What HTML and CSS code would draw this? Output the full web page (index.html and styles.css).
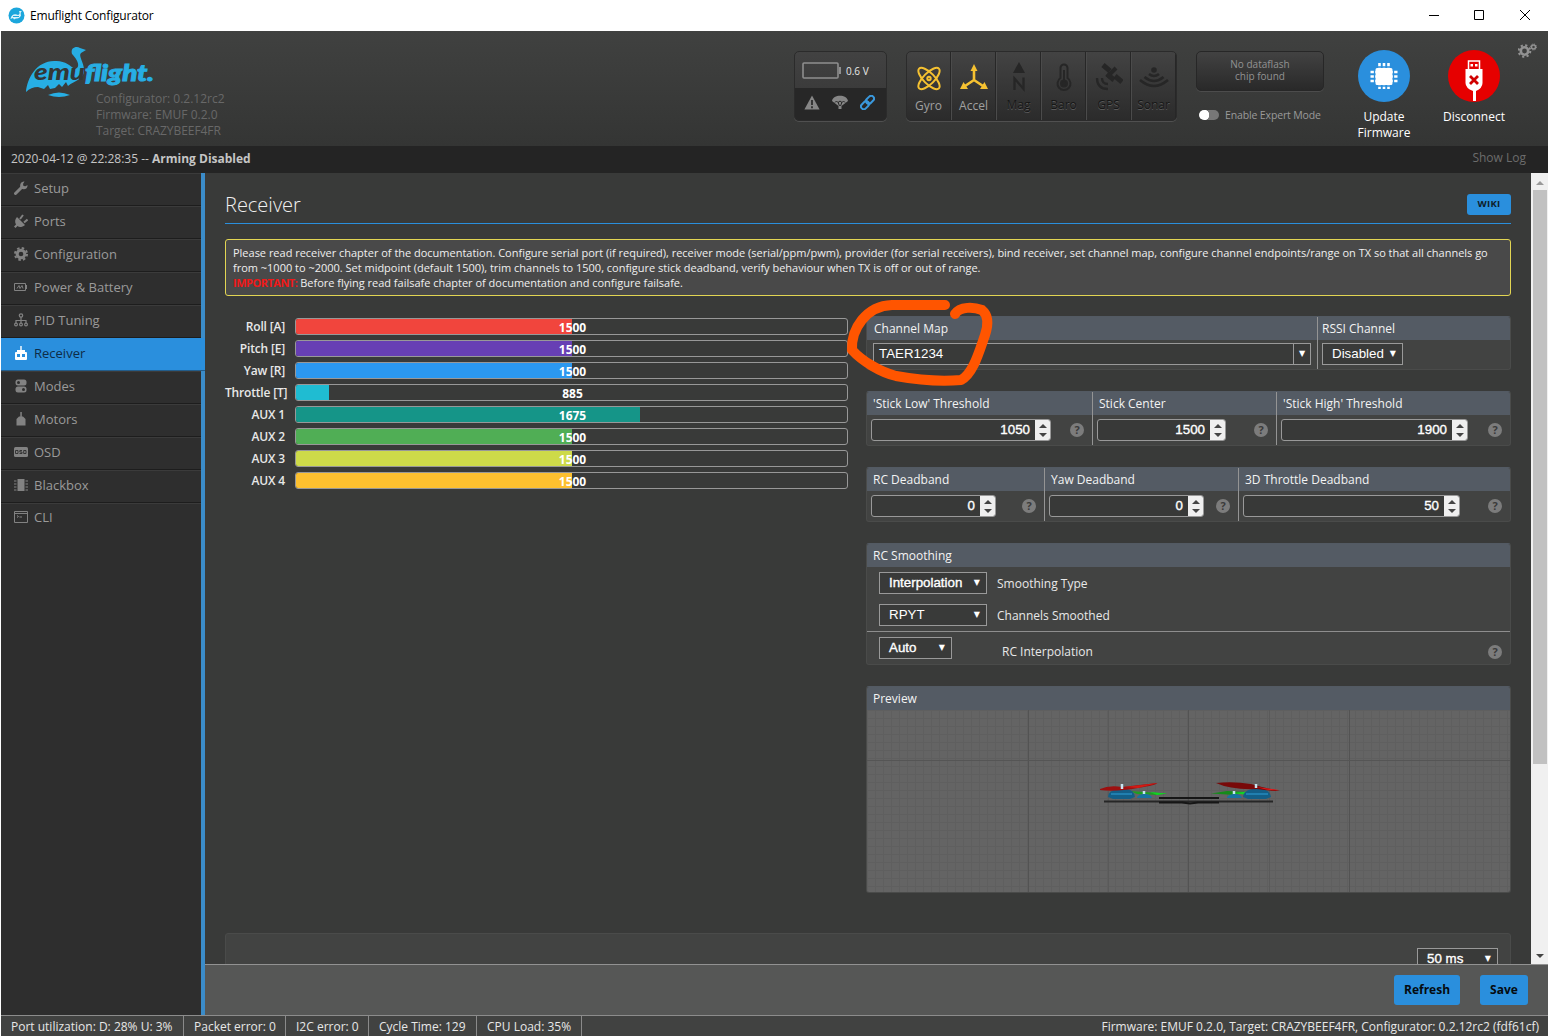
FILE: index.html
```html
<!DOCTYPE html>
<html lang="en">
<head>
<meta charset="utf-8">
<title>Emuflight Configurator</title>
<link rel="stylesheet" href="styles.css">
</head>
<body>
<div class="window">
  <div class="titlebar">
    <svg class="app-icon" width="17" height="17" viewBox="0 0 17 17"><circle cx="8.5" cy="8.5" r="8" fill="#1ba6dc"/><path d="M2.500 12C3 7.500 7 6 10 8Q12.500 7 11 4L14 4Q12 5 13 8.500Q11.500 12 8 11.500L6 12.500L5 11Z" fill="#d8f1fa"/><path d="M5 9.500h6" stroke="#1ba6dc"/></svg>
    <span class="app-title">Emuflight Configurator</span>
    <svg class="win-buttons" width="110" height="31" viewBox="0 0 110 31" fill="none" stroke="#000"><path d="M0 15.500h10M45.500 10.500h9v9h-9zM91 10l10 10M101 10l-10 10"/></svg>
  </div>

  <header class="header">
    <div class="brand">
      <svg width="132" height="56" viewBox="24 44 132 56">
        <path d="M26 92C27 78 37 61 54 61C65 60 70 66 75 69C82 67 76 58 72 54C70 47 77 46 80 48L86 50L81 53C78 56 84 62 84 70C84 80 75 80 68 86L66 82L62 87L59 84L55 88L50 89L48 85L44 89L38 87Q31 87 26 92Z" fill="#27aee4"/>
        <path d="M48 95Q59 90 70 95Q59 99 48 95Z" fill="#27aee4"/>
        <text class="logo-text" x="34" y="80" textLength="51" lengthAdjust="spacingAndGlyphs" fill="#343635">emu</text>
        <text class="logo-text" x="85" y="81" textLength="69" lengthAdjust="spacingAndGlyphs" fill="#27aee4" stroke="#27aee4">flight.</text>
      </svg>
      <div class="versions"><span>Configurator: 0.2.12rc2</span><span>Firmware: EMUF 0.2.0</span><span class="target">Target: CRAZYBEEF4FR</span></div>
    </div>

    <div class="power">
      <div class="power-top">
        <svg width="40" height="18" viewBox="0 0 40 18"><rect x="1" y="1" width="35" height="15" rx="1" fill="none" stroke="#8e8e8e" stroke-width="1.600"/><path d="M37 5h2v7h-2z" fill="#8e8e8e"/></svg>
        <span>0.6 V</span>
      </div>
      <div class="power-bottom">
        <svg width="16" height="15" viewBox="0 0 16 15"><path d="M8 0.500L15.600 14.500H0.400Z" fill="#868686"/><path d="M8 5v5M8 11.200v2" stroke="#272727" stroke-width="1.700"/></svg>
        <svg width="16" height="15" viewBox="0 0 16 15"><path d="M0 6C1-1 15-1 16 6L9.500 11v3h-3v-3Z" fill="#868686"/><path d="M3 7.500Q4.500 4.500 6 7.500Q8 4.500 10 7.500Q11.500 4.500 13 7.500M6 7l1.500 4M10 7l-1.500 4" fill="none" stroke="#272727"/></svg>
        <svg width="15" height="15" viewBox="0 0 15 15" fill="none" stroke="#3a98dc" stroke-width="2"><rect x="5.500" y="2" width="9" height="5.600" rx="2.800" transform="rotate(-45 10 4.800)"/><rect x="0.500" y="7.400" width="9" height="5.600" rx="2.800" transform="rotate(-45 5 10.200)"/></svg>
      </div>
    </div>

    <div class="sensors">
      <div class="sensor on"><svg width="28" height="32" viewBox="0 0 28 32" fill="none" stroke="#f5c131" stroke-width="2"><ellipse cx="14" cy="17.500" rx="14" ry="5.500" transform="rotate(45 14 17.500)"/><ellipse cx="14" cy="17.500" rx="14" ry="5.500" transform="rotate(-45 14 17.500)"/><circle cx="14" cy="17.500" r="1.700"/></svg><span>Gyro</span></div>
      <div class="sensor on"><svg width="28" height="32" viewBox="0 0 28 32"><path d="M14 7v13M14 19l-9 6M14 19l9 6" stroke="#f5c131" stroke-width="2.600"/><path d="M14 3l3.500 7h-7zM0 28l3.500-7 4.500 7zM28 28l-3.500-7-4.500 7z" fill="#f5c131"/></svg><span>Accel</span></div>
      <div class="sensor"><svg width="28" height="32" viewBox="0 0 28 32"><path d="M14 1l6 11H8z" fill="#262626"/><path d="M9.500 29V17.500l9 10.500V16.500" fill="none" stroke="#262626" stroke-width="2.300"/></svg><span>Mag</span></div>
      <div class="sensor"><svg width="28" height="32" viewBox="0 0 28 32" fill="none" stroke="#262626" stroke-width="2"><path d="M10.500 17V7a3.500 3.500 0 0 1 7 0v10a6.500 6.500 0 1 1-7 0zM14 9v12"/><circle cx="14" cy="22.500" r="3" fill="#262626"/></svg><span>Baro</span></div>
      <div class="sensor"><svg width="28" height="32" viewBox="0 0 28 32" fill="none" stroke="#262626"><path d="M8 4l7 6M20 15l7 6" stroke-width="5"/><path d="M12 16l9-9" stroke-width="4"/><path d="M12 13l7 6" stroke-width="5"/><path d="M7 17q0 6 6 6M2 17q0 11 11 11" stroke-width="2.300"/></svg><span>GPS</span></div>
      <div class="sensor"><svg width="30" height="32" viewBox="0 0 30 32" fill="none" stroke="#262626" stroke-width="2.600"><circle cx="15" cy="9" r="1.500"/><path d="M10 13q5 4 10 0M5.500 16q9.500 8 19 0M1 19q14 12 28 0"/></svg><span>Sonar</span></div>
    </div>

    <div class="flash-column">
      <div class="dataflash">No dataflash<br>chip found</div>
      <div class="expert"><i class="switch"></i><span>Enable Expert Mode</span></div>
    </div>

    <div class="action update">
      <svg width="52" height="52" viewBox="0 0 52 52"><circle cx="26" cy="26" r="26" fill="#2a8fdd"/><rect x="17.500" y="18" width="17" height="17" rx="1.500" fill="#fff"/><path d="M21.500 13v26M26 13v26M30.500 13v26M12.500 22h27M12.500 26.500h27M12.500 31h27" stroke="#fff" stroke-width="2.600"/><path d="M16.500 17h19v19h-19z" fill="none" stroke="#2a8fdd" stroke-width="1.300"/></svg>
      <span>Update<br>Firmware</span>
    </div>
    <div class="action disconnect">
      <svg width="52" height="52" viewBox="0 0 52 52"><circle cx="26" cy="26" r="26" fill="#e60000"/><path d="M20.500 19v-8h11v8" fill="none" stroke="#fff" stroke-width="1.500"/><path d="M22.500 14h2.500v2.500h-2.500zM27 14h2.500v2.500H27zM17.500 19h17v14q0 5-6.500 8v10h-3V41q-7.500-3-7.500-8z" fill="#fff"/><path d="M22 26l8 8M30 26l-8 8" stroke="#d00000" stroke-width="2.800"/></svg>
      <span>Disconnect</span>
    </div>
    <svg class="options" width="19" height="16" viewBox="0 0 19 16" fill="none" stroke="#929292"><circle cx="6.500" cy="8" r="3.700" stroke-width="2.600"/><circle cx="6.500" cy="8" r="5.800" stroke-width="2" stroke-dasharray="2.200 2.350"/><circle cx="15.500" cy="4" r="2" stroke-width="1.500"/><circle cx="15.500" cy="4" r="3" stroke-dasharray="1.200 1.150"/></svg>
  </header>

  <div class="log"><span>2020-04-12 @ 22:28:35 -- <b>Arming Disabled</b></span><span class="show-log">Show Log</span></div>

  <div class="body">
    <nav class="tabs">
      <a class="tab"><svg width="14" height="14" viewBox="0 0 14 14"><path d="M1.500 12.500L8 6" stroke="#828282" stroke-width="3" stroke-linecap="round"/><path d="M10.500 0.500L9 3l.500 2 2 .300L13.500 4C14 8 10 9 7 7.500 5 4 7 0 10.500.500z" fill="#828282"/></svg>Setup</a>
      <a class="tab"><svg width="14" height="14" viewBox="0 0 14 14"><path d="M3 3l8 8C8 13.500 5 13.500 3.500 12L1.500 14 0 12.500 2 10.500C.500 8 1 5 3 3z" fill="#828282"/><path d="M6 5l3-4M10 8.500l3.500-3" stroke="#828282" stroke-width="2"/></svg>Ports</a>
      <a class="tab"><svg width="14" height="14" viewBox="0 0 14 14" fill="none" stroke="#828282"><circle cx="7" cy="7" r="3.800" stroke-width="3"/><circle cx="7" cy="7" r="6" stroke-width="2" stroke-dasharray="2.500 2.212"/></svg>Configuration</a>
      <a class="tab"><svg width="14" height="14" viewBox="0 0 14 14" fill="none" stroke="#828282"><path d="M.500 3.500h11v7H.500zM12.500 5v4M3 8.500l2-3 1 3 2-3 1 3"/></svg>Power &amp; Battery</a>
      <a class="tab"><svg width="14" height="14" viewBox="0 0 14 14" fill="none" stroke="#828282" stroke-width="1.200"><circle cx="7" cy="2.500" r="1.700"/><path d="M7 4v6M2 10V7.500h10V10"/><circle cx="2" cy="11.500" r="1.400"/><circle cx="7" cy="11.500" r="1.400"/><circle cx="12" cy="11.500" r="1.400"/></svg>PID Tuning</a>
      <a class="tab active"><svg width="14" height="14" viewBox="0 0 14 14"><path d="M6.300 0h1.400v4H6.300zM3 4h8v3H3zM1 7q0-1 1-1h10q1 0 1 1v6q0 1-1 1H2q-1 0-1-1z" fill="#fff"/><path d="M3 8h3v3H3zM8 8h3v3H8z" fill="#2a8fdd"/></svg>Receiver</a>
      <a class="tab"><svg width="14" height="14" viewBox="0 0 14 14"><rect x="1.500" y=".500" width="11" height="6" rx="2.500" fill="#828282"/><rect x="1.500" y="7.500" width="11" height="6" rx="2.500" fill="#828282"/><circle cx="4.500" cy="3.500" r="1.500" fill="#2e2e2e"/><circle cx="9.500" cy="10.500" r="1.500" fill="#2e2e2e"/></svg>Modes</a>
      <a class="tab"><svg width="14" height="14" viewBox="0 0 14 14"><path d="M6.300 0h1.500v5H6.300zM5 4.500h4L11.500 7v6.500h-9V7z" fill="#828282"/></svg>Motors</a>
      <a class="tab"><svg width="14" height="14" viewBox="0 0 14 14"><rect y="2" width="14" height="10" rx="1.500" fill="#828282"/><path d="M1.500 5.500h2.500v3H1.500zM8 5.500H5.800v1.500H8v1.500H5.500M9.700 5.500H12v3H9.700z" fill="none" stroke="#2e2e2e" stroke-width=".900"/></svg>OSD</a>
      <a class="tab"><svg width="14" height="14" viewBox="0 0 14 14"><path d="M3.500 1h7v12h-7zM0 2.500h2.500v1H0zM0 5.500h2.500v1H0zM0 8.500h2.500v1H0zM0 11.500h2.500v1H0zM11.500 2.500H14v1h-2.500zM11.500 5.500H14v1h-2.500zM11.500 8.500H14v1h-2.500zM11.500 11.500H14v1h-2.500z" fill="#828282"/></svg>Blackbox</a>
      <a class="tab"><svg width="14" height="14" viewBox="0 0 14 14" fill="none" stroke="#828282"><path d="M.500 1.500h13v11H.500zM0 3.500h14M3 5.500l1.500 1L3 7.500M5.500 7H8"/></svg>CLI</a>
    </nav>

    <div class="main">
      <div class="scroll-row">
        <main class="content">
          <div class="page-head"><h1>Receiver</h1><a class="wiki">WIKI</a></div>
          <div class="note">
            <p>Please read receiver chapter of the documentation. Configure serial port (if required), receiver mode (serial/ppm/pwm), provider (for serial receivers), bind receiver, set channel map, configure channel endpoints/range on TX so that all channels go</p>
            <p>from ~1000 to ~2000. Set midpoint (default 1500), trim channels to 1500, configure stick deadband, verify behaviour when TX is off or out of range.</p>
            <p><b>IMPORTANT:</b> Before flying read failsafe chapter of documentation and configure failsafe.</p>
          </div>
          <div class="columns">
            <div class="bars">
              <div class="bar-row"><span>Roll [A]</span><div class="meter"><i class="fill roll" style="width:50%"></i><b>1500</b></div></div>
              <div class="bar-row"><span>Pitch [E]</span><div class="meter"><i class="fill pitch" style="width:50%"></i><b>1500</b></div></div>
              <div class="bar-row"><span>Yaw [R]</span><div class="meter"><i class="fill yaw" style="width:50%"></i><b>1500</b></div></div>
              <div class="bar-row"><span class="wide">Throttle [T]</span><div class="meter"><i class="fill throttle" style="width:6%"></i><b>885</b></div></div>
              <div class="bar-row"><span>AUX 1</span><div class="meter"><i class="fill aux1" style="width:62.4%"></i><b>1675</b></div></div>
              <div class="bar-row"><span>AUX 2</span><div class="meter"><i class="fill aux2" style="width:50%"></i><b>1500</b></div></div>
              <div class="bar-row"><span>AUX 3</span><div class="meter"><i class="fill aux3" style="width:50%"></i><b>1500</b></div></div>
              <div class="bar-row"><span>AUX 4</span><div class="meter"><i class="fill aux4" style="width:50%"></i><b>1500</b></div></div>
            </div>

            <div class="settings">
              <section class="card map">
                <div class="cell"><h2>Channel Map</h2><div class="cell-body"><div class="combo"><span>TAER1234</span><em>▼</em></div></div></div>
                <div class="cell"><h2>RSSI Channel</h2><div class="cell-body"><div class="select rssi"><span>Disabled</span><em>▼</em></div></div></div>
              </section>
              <section class="card sticks">
                <div class="cell"><h2>'Stick Low' Threshold</h2><div class="cell-body"><div class="number stick-low"><span>1050</span><i class="spin"></i></div><i class="help">?</i></div></div>
                <div class="cell"><h2>Stick Center</h2><div class="cell-body"><div class="number stick-center"><span>1500</span><i class="spin"></i></div><i class="help">?</i></div></div>
                <div class="cell"><h2>'Stick High' Threshold</h2><div class="cell-body"><div class="number stick-high"><span>1900</span><i class="spin"></i></div><i class="help">?</i></div></div>
              </section>
              <section class="card deadband">
                <div class="cell"><h2>RC Deadband</h2><div class="cell-body"><div class="number rc"><span>0</span><i class="spin"></i></div><i class="help">?</i></div></div>
                <div class="cell"><h2>Yaw Deadband</h2><div class="cell-body"><div class="number yaw-db"><span>0</span><i class="spin"></i></div><i class="help">?</i></div></div>
                <div class="cell"><h2>3D Throttle Deadband</h2><div class="cell-body"><div class="number throttle-db"><span>50</span><i class="spin"></i></div><i class="help">?</i></div></div>
              </section>
              <section class="card smoothing">
                <h2>RC Smoothing</h2>
                <div class="opt"><div class="select wide"><span class="strong">Interpolation</span><em>▼</em></div><label>Smoothing Type</label></div>
                <div class="opt"><div class="select wide"><span>RPYT</span><em>▼</em></div><label>Channels Smoothed</label></div>
                <div class="opt last"><div class="select auto"><span class="strong">Auto</span><em>▼</em></div><label>RC Interpolation</label><i class="help">?</i></div>
              </section>
              <section class="card preview">
                <h2>Preview</h2>
                <div class="scene">
                  <svg width="200" height="40" viewBox="1090 774 200 40">
                    <path d="M1104 801.500h169" stroke="#262626" stroke-width="2"/>
                    <path d="M1159 798h60M1159 802.500h23l8 1 8-1h21" stroke="#161616" stroke-width="2.200" fill="none"/>
                    <path d="M1130 791l14 1 23 1.500-10 1.500-20-1z" fill="#1c9f22"/><path d="M1211 793.500l16-2.500 20 1-12 3z" fill="#158b1a"/><path d="M1150 792l17 1.500-10 1.500zM1232 793l16-1.500-4 3z" fill="#12d424"/>
                    <path d="M1137 798q0-3 6-4h3q5 .500 6 4zM1227 798q0-3 6-4h3q5 .500 6 4z" fill="#1873a0"/>
                    <path d="M1108 797q0-6 9-8h10q7 1 8 8l-5 2h-17zM1243 797q0-6 9-8h10q8 1 9 8l-5 2h-18z" fill="#135f88"/>
                    <path d="M1111 794h21M1246 794h22" stroke="#268abd" stroke-width="1.500"/>
                    <path d="M1100 789q9-4 22-2l35-4q0 2-19 5-22 4-38 2z" fill="#9d1010"/><path d="M1125 787l33-4-20 5z" fill="#d31b15"/>
                    <path d="M1216 783q17-2 35 1l11 3 18 4q-12 0-23-2-26 1-41-6z" fill="#780909"/><path d="M1256 787l23 3q-9 1-19-2z" fill="#e51b1b"/>
                    <path d="M1122 784v5M1144 791v3M1234 791v3M1256 784v4" stroke="#c8e5f2" stroke-width="2.500"/>
                  </svg>
                </div>
              </section>
            </div>
          </div>
          <section class="card graph"><div class="select rate"><span class="strong">50 ms</span><em>▼</em></div></section>
        </main>
        <div class="scrollbar"><i class="up"></i><i class="thumb"></i><i class="down"></i></div>
      </div>
      <div class="toolbar"><a class="btn refresh">Refresh</a><a class="btn save">Save</a></div>
    </div>
  </div>

  <footer class="status">
    <span class="s1">Port utilization: D: 28% U: 3%</span><span class="s2">Packet error: 0</span><span class="s3">I2C error: 0</span><span class="s4">Cycle Time: 129</span><span class="s5">CPU Load: 35%</span>
    <span class="build">Firmware: EMUF 0.2.0, Target: CRAZYBEEF4FR, Configurator: 0.2.12rc2 (fdf61cf)</span>
  </footer>
  <svg class="scribble" width="160" height="100" viewBox="840 290 160 100" fill="none" stroke="#ff5500" stroke-width="10" stroke-linecap="round" stroke-linejoin="round"><path d="M945 305H892C866 306 851 329 852 350C862 361 880 372 896 376C918 380 939 382 961 380C973 374 979 352 985 335C989 323 988 315 982 310C974 307 960 306 955 314"/></svg>
</div>
</body>
</html>
```
FILE: styles.css
```css
* { box-sizing: border-box; }
body { margin: 0; background: #fff; font: 12px/16px "Open Sans", sans-serif; color: #e8e8e8; }
h1, h2, p { margin: 0; font-weight: 400; }
i, em { font-style: normal; }
svg { display: block; flex: none; }
span, label, a, h2, p { white-space: nowrap; }

.window { position: relative; display: flex; flex-direction: column; width: 1549px; height: 1036px; padding: 0 1px; overflow: hidden; background: #fff; }
.titlebar { display: flex; align-items: center; flex: none; height: 31px; padding-left: 7px; color: #000; }
.app-title { margin-left: 5px; letter-spacing: -0.180px; }
.win-buttons { margin-left: auto; margin-right: 9px; }

/* header */
.header { display: flex; align-items: flex-start; flex: none; height: 115px; background: linear-gradient(#404140, #343534); }
.brand { display: flex; flex-direction: column; width: 793px; padding: 13px 0 0 23px; }
.versions { display: flex; flex-direction: column; margin: -9px 0 0 72px; color: #686868; }
.versions span { display: block; }
.versions .target { letter-spacing: -0.050px; }
.logo-text { font: italic 900 23px "Lato", sans-serif; }
.power { width: 93px; height: 70px; margin-top: 20px; border: 1px solid #2b2b2b; border-radius: 5px; overflow: hidden; box-shadow: 0 1px 0 #505050; background: linear-gradient(#424242, #353535); }
.power-top { display: flex; align-items: center; gap: 4px; height: 36px; padding: 1px 0 0 7px; font-size: 10px; }
.power-bottom { display: flex; align-items: center; gap: 12px; height: 33px; padding: 0 0 4px 9px; background: #272727; }
.sensors { display: flex; width: 271px; height: 70px; margin: 20px 0 0 19px; border: 1px solid #2b2b2b; border-radius: 5px; overflow: hidden; box-shadow: 0 1px 0 #505050; background: linear-gradient(#434343, #2b2b2b); }
.sensor { display: flex; flex-direction: column; align-items: center; flex: 1; padding-top: 9px; border-left: 1px solid #4b4b4b; border-right: 1px solid #272727; color: #161616; text-shadow: 0 1px 0 #5a5a5a; }
.sensor:first-child { border-left: 0; }
.sensor span { margin-top: 4px; }
.sensor.on span { margin-top: 5px; }
.sensor.on { color: #a0a0a0; text-shadow: none; }
.flash-column { width: 128px; margin: 20px 0 0 19px; }
.dataflash { height: 40px; padding-top: 6px; border: 1px solid #272727; border-radius: 5px; box-shadow: 0 1px 0 #4c4c4c; background: linear-gradient(#424242, #292929); font-size: 10px; line-height: 12px; text-align: center; color: #929292; }
.expert { display: flex; align-items: center; gap: 6px; margin: 16px 0 0 3px; font-size: 10.500px; letter-spacing: -0.140px; color: #9a9a9a; }
.switch { width: 20px; height: 10px; border-radius: 5px; background: radial-gradient(circle at 5px 5px, #fff 5px, #777 5.500px); }
.action { display: flex; flex-direction: column; align-items: center; width: 70px; margin-top: 19px; text-align: center; color: #fff; }
.action span { margin-top: 7px; }
.update { margin-left: 25px; }
.disconnect { margin-left: 20px; }
.options { margin: 12px 0 0 9px; }

.log { display: flex; justify-content: space-between; flex: none; height: 27px; padding: 5px 22px 0 10px; background: #242424; color: #c5c5c5; }
.log b { font-weight: 700; }
.show-log { color: #6c6c6c; margin-top: -1px; }

.body { display: flex; flex: 1; min-height: 0; }
.tabs { width: 204px; flex: none; border-right: 4px solid #3b8cc9; background: #2e2e2e; }
.tab { display: flex; align-items: center; gap: 6px; height: 33px; padding: 0 0 3px 13px; border-top: 1px solid #3b3b3b; border-bottom: 1px solid #1d1d1d; font-size: 13px; color: #9a9a9a; }
.tab:last-child { padding-bottom: 6px; border-bottom: 0; }
.tab.active { width: 204px; border-top-color: #2a8fdd; border-bottom-color: #235d8b; background: #2a8fdd; color: #0e2c47; }

.main { display: flex; flex-direction: column; flex: 1; min-width: 0; }
.scroll-row { display: flex; flex: 1; min-height: 0; }
.content { width: 1326px; padding: 21px 20px 0; overflow: hidden; background: #393a39; }
.page-head { display: flex; justify-content: space-between; height: 30px; border-bottom: 1px solid #2a8fdd; }
h1 { font-size: 20px; line-height: 22px; font-weight: 300; color: #f0f0f0; }
.wiki { width: 44px; height: 21px; border-radius: 3px; background: #2a8fdd; color: #0d1c29; font: 700 9.500px/20px "Open Sans", sans-serif; letter-spacing: .3px; text-align: center; }
.note { height: 57px; margin-top: 15px; padding: 5px 7px; border: 1px solid #e2d553; border-radius: 3px; background: #494949; font-size: 11px; line-height: 15px; letter-spacing: -0.011px; color: #efefef; }
.note b { letter-spacing: -0.500px; color: #f01818; }
.columns { display: flex; gap: 18px; margin-top: 20px; }

/* channel meters */
.bars { display: flex; flex-direction: column; gap: 5px; width: 623px; padding-top: 2px; }
.bar-row { display: flex; height: 17px; }
.bar-row > span { width: 60px; margin-right: 10px; text-align: right; font-weight: 600; line-height: 18px; letter-spacing: -0.180px; }
.bar-row > .wide { width: 62px; margin-right: 8px; }
.meter { position: relative; width: 553px; border: 1px solid #989898; border-radius: 3px; overflow: hidden; }
.meter b { position: absolute; inset: 0 0 0 2px; font-weight: 700; line-height: 17px; text-align: center; color: #fff; }
.fill { display: block; height: 100%; }
.roll { background: #f1453d; }
.pitch { background: #673fb4; }
.yaw { background: #2b98f0; }
.throttle { background: #1fbcd2; }
.aux1 { background: #159588; }
.aux2 { background: #50ae55; }
.aux3 { background: #cdda49; }
.aux4 { background: #fdc02f; }

/* setting cards */
.settings { width: 645px; }
.card { border: 1px solid #4a4b4a; border-top-color: #535a63; border-radius: 3px; background: #424342; overflow: hidden; }
.card h2 { height: 23px; padding-left: 6px; background: #545b64; font-size: 12px; line-height: 24px; color: #f3f3f3; }
.map, .sticks, .deadband { display: grid; height: 55px; margin-bottom: 21px; }
.map { grid-template-columns: 450px 1fr; height: 54px; }
.sticks { grid-template-columns: 225px 184px 1fr; }
.deadband { grid-template-columns: 177px 194px 1fr; }
.cell + .cell { border-left: 1px solid #949494; }
.map .cell:first-child h2 { padding-left: 7px; }
.map .cell + .cell h2 { padding-left: 4px; }
.cell-body { display: flex; justify-content: space-between; align-items: flex-start; padding: 4px 8px 0 4px; }
.map .cell-body { padding: 3px 6px 0; }
.map .cell + .cell .cell-body { padding-left: 4px; }
.combo, .select, .number { display: flex; height: 22px; border: 1px solid #999; background: #393a39; font: 13.330px/20px "Liberation Sans", sans-serif; color: #fff; }
.combo, .select { justify-content: space-between; }
.combo { width: 438px; padding-left: 5px; }
em { font: 8px/19px "DejaVu Sans", sans-serif; }
.combo em { width: 17px; height: 20px; border-left: 1px solid #999; text-align: center; }
.select { padding: 0 6px 0 9px; }
.strong, .number span { -webkit-text-stroke: .35px #fff; }
.select.rssi { width: 81px; }
.select.wide { width: 108px; }
.select.auto { width: 73px; }
.number { justify-content: flex-end; border-radius: 3px; background: #383938; overflow: hidden; }
.number span { margin-right: 5px; }
.spin { display: flex; flex-direction: column; align-items: center; justify-content: center; gap: 5px; width: 15px; background: #efefef; }
.spin::before, .spin::after { content: ""; border: 4px solid transparent; border-top: 0; border-bottom: 4px solid #444; }
.spin::after { border-bottom: 0; border-top: 4px solid #444; }
.stick-low { width: 180px; } .stick-center { width: 129px; } .stick-high { width: 187px; }
.rc { width: 125px; } .yaw-db { width: 155px; } .throttle-db { width: 217px; }
.help { width: 14px; height: 14px; margin-top: 4px; border-radius: 50%; background: #7c7c7c; color: #3a3a3a; font: 700 11px/14px "Open Sans", sans-serif; text-align: center; }
.smoothing { height: 122px; margin-bottom: 21px; }
.opt { display: flex; align-items: flex-start; height: 32px; padding: 5px 8px 0 12px; }
.opt label { margin: 4px 0 0 10px; }
.opt.last { height: 34px; border-top: 1px solid #8e8e8e; }
.opt.last label { margin: 7px 0 0 50px; }
.opt.last .help { margin: 8px 0 0 auto; }
.preview { height: 207px; }
.scene { display: flex; height: 183px; padding: 64px 0 0 223px; background:
  linear-gradient(transparent 50px, #555 50px 51px, transparent 51px),
  linear-gradient(90deg, transparent 161px, #535353 161px 162px, transparent 162px 321px, #535353 321px 322px, transparent 322px 482px, #535353 482px 483px, transparent 483px),
  linear-gradient(90deg, transparent 241px, #5a5a5a 241px 242px, transparent 242px 402px, #5a5a5a 402px 403px, transparent 403px),
  repeating-linear-gradient(90deg, #5f5f5f 0 1px, transparent 1px 8px),
  repeating-linear-gradient(#5f5f5f 0 1px, transparent 1px 8px), #646464; }
.graph { display: flex; justify-content: flex-end; align-items: flex-start; height: 60px; margin-top: 40px; padding: 14px 12px; border-top-color: #4a4b4a; }
.select.rate { width: 81px; }

.scrollbar { display: flex; flex-direction: column; align-items: center; flex: 1; height: 791px; background: #f0f0f0; }
.scrollbar .up { margin-top: 8px; border: 4px solid transparent; border-top: 0; border-bottom: 4px solid #999; }
.scrollbar .thumb { width: 14px; height: 574px; margin-top: 5px; background: #c1c1c1; }
.scrollbar .down { margin-top: auto; margin-bottom: 6px; border: 4px solid transparent; border-bottom: 0; border-top: 4px solid #444; }
.toolbar { display: flex; justify-content: flex-end; gap: 20px; flex: none; height: 51px; padding: 10px 20px 0; border-top: 1px solid #929292; background: #565756; }
.btn { height: 30px; border-radius: 3px; background: #2a8fdd; color: #050b10; font-weight: 700; line-height: 29px; text-align: center; }
.refresh { width: 66px; }
.save { width: 48px; }

.status { display: flex; flex: none; height: 21px; border-top: 1px solid #8c8c8c; background: #414241; line-height: 21px; }
.status span { padding-left: 10px; border-right: 1px solid #8a8a8a; }
.s1 { width: 183px; } .s2 { width: 102px; } .s3 { width: 83px; } .s4 { width: 108px; } .s5 { width: 105px; }
.status .build { margin-left: auto; padding-right: 9px; border: 0; }

/* freehand annotation drawn over the page */
.scribble { position: absolute; left: 840px; top: 290px; }
```
